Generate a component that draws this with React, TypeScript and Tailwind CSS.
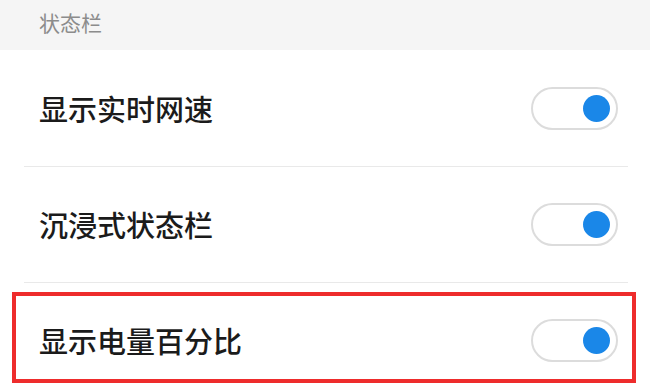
import { useState } from "react";

function Toggle({ on, onClick }: { on: boolean; onClick: () => void }) {
  return (
    <button
      onClick={onClick}
      className={`flex h-[43px] w-[87px] items-center rounded-full border-2 border-[#dcdcdc] bg-white px-[6px] ${
        on ? "justify-end" : "justify-start"
      }`}
    >
      <span className={`block h-[27px] w-[27px] rounded-full ${on ? "bg-[#1a87e8]" : "bg-[#cfcfcf]"}`} />
    </button>
  );
}

export default function App() {
  const [items, setItems] = useState([
    { label: "显示实时网速", on: true },
    { label: "沉浸式状态栏", on: true },
    { label: "显示电量百分比", on: true },
  ]);

  const toggle = (i: number) =>
    setItems(items.map((it, idx) => (idx === i ? { ...it, on: !it.on } : it)));

  return (
    <div className="h-[392px] w-[650px] overflow-hidden bg-white font-['Noto_Sans_CJK_SC',sans-serif]">
      {/* Section header */}
      <div className="flex h-[50px] items-start bg-[#f5f5f5] pl-[39px] pt-[7px]">
        <span className="text-[21px] leading-[30px] text-[#8c8c8c]">状态栏</span>
      </div>

      {items.map((it, i) => (
        <div key={i} className="relative">
          {i > 0 && <div className="ml-[24px] mr-[22px] h-px bg-[#e9e9e9]" />}
          <div className={`flex items-center justify-between pl-[39px] pr-[32px] ${i === 0 ? "h-[116px]" : "h-[115px]"}`}>
            <span className="text-[29px] font-medium leading-none text-[#1b1b1b]">{it.label}</span>
            <Toggle on={it.on} onClick={() => toggle(i)} />
          </div>
          {i === 2 && (
            <div className="pointer-events-none absolute left-[12px] top-[10px] h-[91px] w-[624px] border-[4px] border-[#ee2c2c]" />
          )}
        </div>
      ))}
    </div>
  );
}
